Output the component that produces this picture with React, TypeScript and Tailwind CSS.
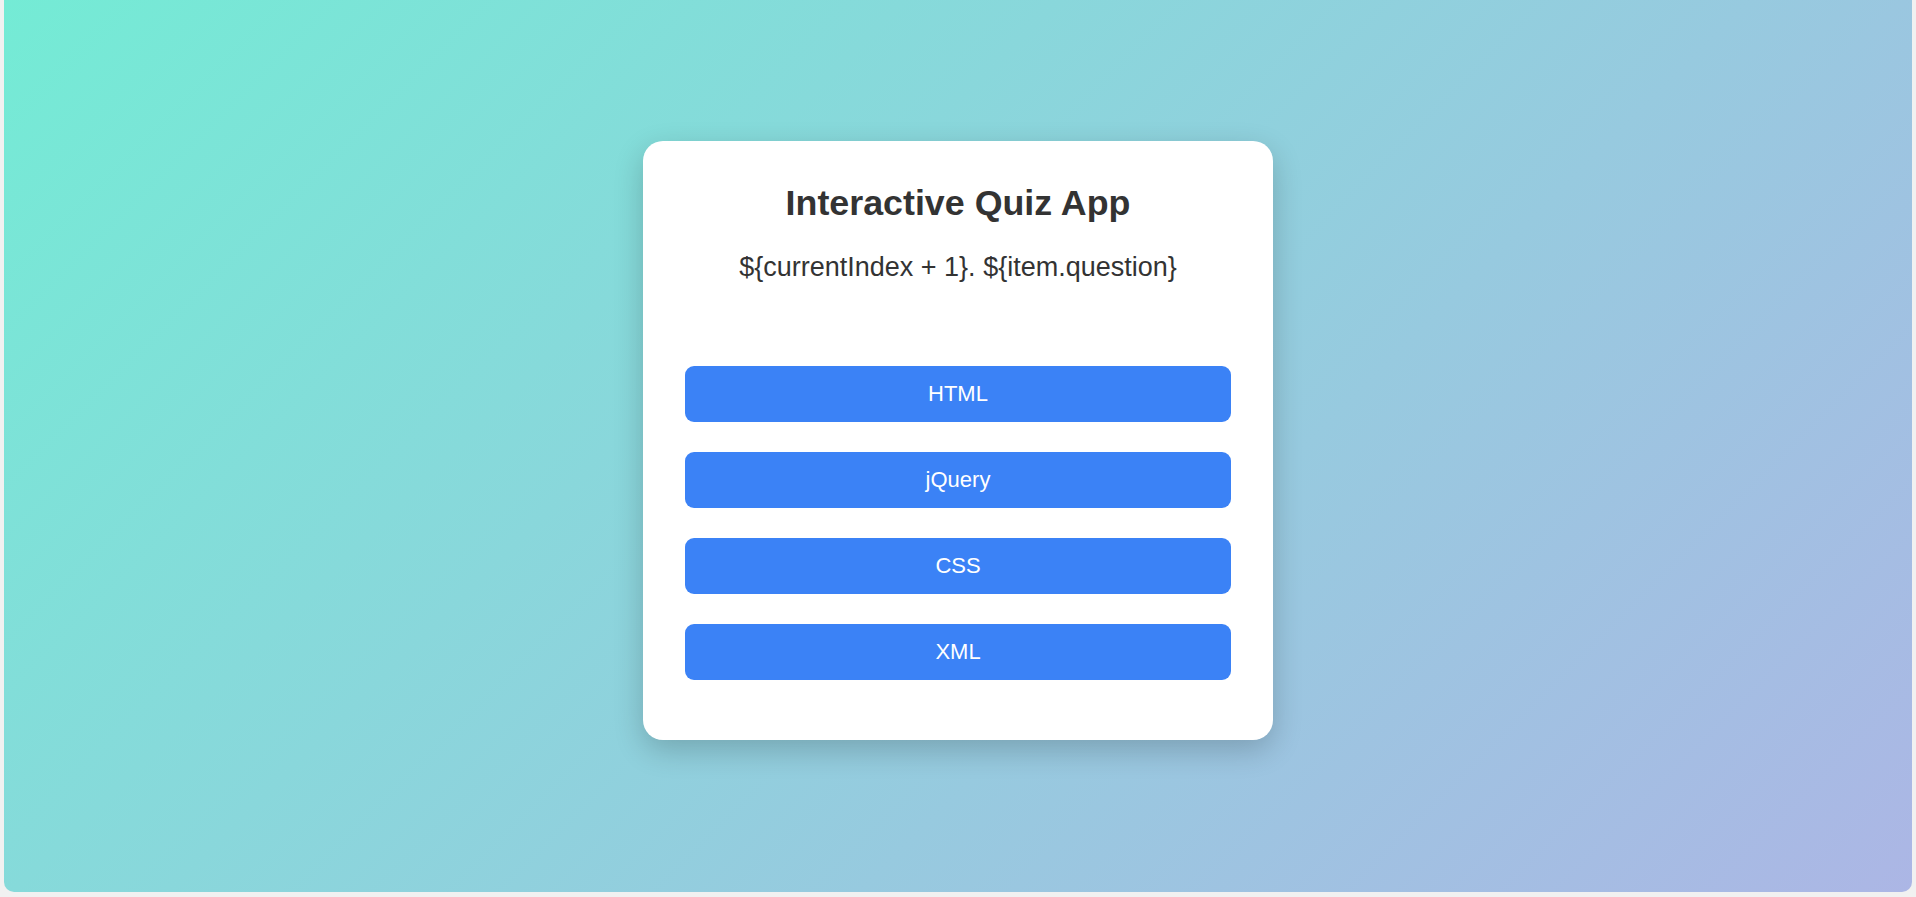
import React from "react";

const options = ["HTML", "jQuery", "CSS", "XML"];

export default function App() {
  return (
    <div
      className="w-full h-[897px] bg-[#f1f1f1] px-[4px] pb-[5px]"
      style={{ fontFamily: '"Liberation Sans", Arial, sans-serif' }}
    >
      <div className="h-full w-full rounded-b-[10px] bg-[linear-gradient(135deg,#74ebd5_0%,#acb6e5_100%)] flex items-center justify-center pb-[12px]">
        <div className="w-[630px] bg-white rounded-[20px] shadow-[0_10px_30px_rgba(0,0,0,0.2)] px-[42px] pt-[42px] pb-[60px] flex flex-col">
          <h1 className="text-[35.8px] leading-[40px] font-bold text-[#333333] text-center">
            Interactive Quiz App
          </h1>
          <p className="mt-[29px] text-[27px] leading-[30px] text-[#333333] text-center">
            {"${currentIndex + 1}. ${item.question}"}
          </p>
          <div className="mt-[84px] flex flex-col gap-[30px]">
            {options.map((o) => (
              <button
                key={o}
                className="h-[56px] w-full rounded-[9px] bg-[#3b82f6] text-white text-[22px] leading-[24px] flex items-center justify-center"
              >
                {o}
              </button>
            ))}
          </div>
        </div>
      </div>
    </div>
  );
}
